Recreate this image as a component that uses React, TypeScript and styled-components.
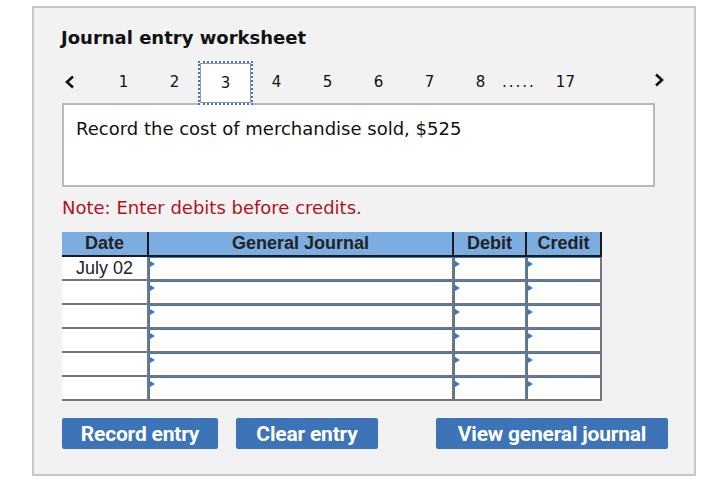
import styled, { createGlobalStyle } from 'styled-components'

const GlobalStyle = createGlobalStyle`
  html, body {
    margin: 0;
    padding: 0;
    background: #ffffff;
  }
`

const Panel = styled.div`
  box-sizing: border-box;
  width: 664px;
  height: 470px;
  margin: 6px 0 0 32px;
  padding: 0 39px 0 28px;
  background: #f2f2f2;
  border: 2px solid #c8c8c8;
  font-family: 'DejaVu Sans', Verdana, sans-serif;
  color: #111;
`

const Title = styled.h1`
  margin: 0 0 0 -1px;
  padding-top: 20px;
  font-size: 18px;
  line-height: 20px;
  font-weight: 700;
`

const Pager = styled.div`
  display: flex;
  align-items: center;
  height: 42px;
  margin: 13px -12px 0 0;
  font-size: 15px;
`

const Arrow = styled.button<{ $right?: boolean }>`
  display: flex;
  align-items: center;
  justify-content: ${(p) => (p.$right ? 'flex-end' : 'flex-start')};
  width: 36px;
  height: 100%;
  margin-left: ${(p) => (p.$right ? 'auto' : '0')};
  padding: ${(p) => (p.$right ? '0 2px 4px 0' : '0 0 0 2px')};
  border: 0;
  background: none;
  cursor: pointer;
`

const Page = styled.span<{ $active?: boolean }>`
  position: relative;
  z-index: 1;
  box-sizing: border-box;
  display: flex;
  align-items: center;
  justify-content: center;
  align-self: flex-start;
  width: ${(p) => (p.$active ? '55px' : '51px')};
  height: ${(p) => (p.$active ? '44px' : '42px')};
  margin: ${(p) => (p.$active ? '0 -2px -2px' : '0')};
  ${(p) =>
    p.$active &&
    `
    background: #fff;
    border: 2px dotted #3b78c4;
    box-shadow: inset 0 0 0 1px #9a9a9a;
  `}
`

const Dots = styled.span`
  margin: 0 20px 0 -4px;
  letter-spacing: 2px;
`

const Prompt = styled.div`
  box-sizing: border-box;
  height: 84px;
  padding: 13px 12px;
  background: #fff;
  border: 2px solid #b9b9b9;
  font-size: 18px;
  line-height: 22px;
`

const Note = styled.p`
  margin: 10px 0 0;
  font-size: 18px;
  line-height: 22px;
  color: #b3121c;
`

const Table = styled.div`
  width: 540px;
  margin-top: 13px;
  font-family: 'Liberation Sans', Arial, sans-serif;
`

const Head = styled.div`
  display: grid;
  grid-template-columns: 85px 303px 71px 73px;
  column-gap: 2px;
  padding-right: 2px;
  background: #1b1b1b;
  border-bottom: 2px solid #1b1b1b;
`

const HeadCell = styled.div`
  height: 23px;
  line-height: 23px;
  text-align: center;
  font-size: 18px;
  font-weight: 700;
  color: #222;
  background: #7badE1;
`

const Row = styled.div`
  display: grid;
  grid-template-columns: 85px 303px 71px 73px;
  column-gap: 2px;
  padding-right: 3px;
  background: #767676;
  border-bottom: 2px solid #767676;
`

const DateCell = styled.div`
  height: 22px;
  line-height: 22px;
  text-align: center;
  font-size: 18px;
  color: #222;
  background: #fff;
`

const Input = styled.div`
  position: relative;
  box-sizing: border-box;
  height: 22px;
  background: #fff;
  border-left: 1px solid #3b78c4;
  border-top: 1px solid #3b78c4;

  &::before {
    content: '';
    position: absolute;
    left: 0;
    top: 3px;
    border-top: 3px solid transparent;
    border-bottom: 3px solid transparent;
    border-left: 5px solid #3b78c4;
  }
`

const Actions = styled.div`
  display: flex;
  gap: 18px;
  margin-top: 17px;
  margin-right: -13px;
`

const Button = styled.button<{ $w: number; $push?: boolean }>`
  width: ${(p) => p.$w}px;
  height: 31px;
  margin-left: ${(p) => (p.$push ? 'auto' : '0')};
  padding: 0;
  border: 0;
  border-radius: 2px;
  background: #3c74b7;
  color: #fff;
  font-family: Roboto, 'Liberation Sans', sans-serif;
  font-size: 21px;
  font-weight: 700;
  letter-spacing: -0.2px;
  cursor: pointer;
`

const Chevron = ({ dir }: { dir: 'left' | 'right' }) => (
  <svg width="12" height="14" viewBox="0 0 12 14">
    <polyline
      points={dir === 'left' ? '9,1.5 3,7 9,12.5' : '3,1.5 9,7 3,12.5'}
      fill="none"
      stroke="#111"
      strokeWidth="2.6"
    />
  </svg>
)

const pages = [1, 2, 3, 4, 5, 6, 7, 8]

export default function App() {
  return (
    <>
      <GlobalStyle />
      <Panel>
        <Title>Journal entry worksheet</Title>
        <Pager>
          <Arrow>
            <Chevron dir="left" />
          </Arrow>
          {pages.map((n) => (
            <Page key={n} $active={n === 3}>
              {n}
            </Page>
          ))}
          <Dots>.....</Dots>
          <span>17</span>
          <Arrow $right>
            <Chevron dir="right" />
          </Arrow>
        </Pager>
        <Prompt>Record the cost of merchandise sold, $525</Prompt>
        <Note>Note: Enter debits before credits.</Note>
        <Table>
          <Head>
            <HeadCell>Date</HeadCell>
            <HeadCell>General Journal</HeadCell>
            <HeadCell>Debit</HeadCell>
            <HeadCell>Credit</HeadCell>
          </Head>
          {[0, 1, 2, 3, 4, 5].map((i) => (
            <Row key={i}>
              <DateCell>{i === 0 ? 'July 02' : ''}</DateCell>
              <Input />
              <Input />
              <Input />
            </Row>
          ))}
        </Table>
        <Actions>
          <Button $w={156}>Record entry</Button>
          <Button $w={142}>Clear entry</Button>
          <Button $w={232} $push>
            View general journal
          </Button>
        </Actions>
      </Panel>
    </>
  )
}
